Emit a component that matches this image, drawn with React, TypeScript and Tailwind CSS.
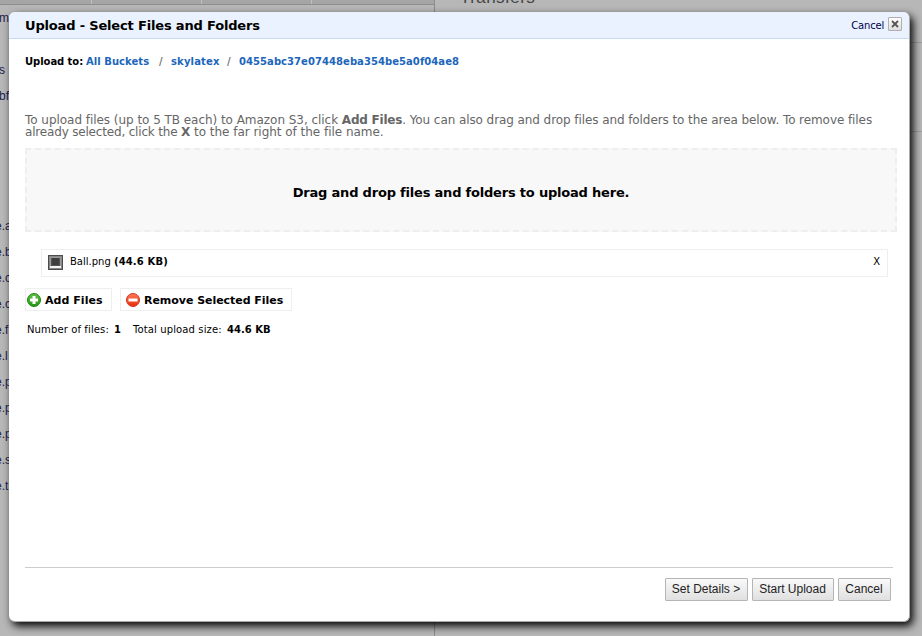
import type { ReactNode } from "react";

const objects = [".a", ".b", ".c", ".c", ".f", ".l", ".p", ".p", ".p", ".s", ".t"];

function Backdrop() {
  return (
    <div className="flex h-full w-full bg-[#b7b7b7] font-['Liberation_Sans',Arial,sans-serif]">
      <div className="h-full w-[435px] shrink-0 border-r border-[#8c8c8c]">
        <div className="flex h-[5px] border-b border-[#8e8e8e] bg-[#a5a5a5]">
          <div className="w-[92px] border-r border-[#c0c0c0]" />
          <div className="w-[110px] border-r border-[#c0c0c0]" />
          <div className="w-[110px] border-r border-[#c0c0c0]" />
        </div>
        <div className="w-[9px] overflow-hidden pt-[2px] text-[12px] text-[#20204a]">
          <div className="-ml-px h-[52px] leading-[22px]">m</div>
          <div className="-ml-px h-[26px] leading-[22px]">s</div>
          <div className="-ml-px h-[130px] leading-[22px]">bf</div>
          {objects.map((ext, i) => (
            <div key={i} className="-ml-[5px] h-[26px] leading-[22px]">
              e{ext}
            </div>
          ))}
        </div>
      </div>
      <div className="flex-1">
        <div className="-mt-[12px] h-[54px] pl-[25px] text-[17px] leading-[20px] tracking-[0.45px] text-[#444]">
          Transfers
        </div>
        <div className="h-[90px] border-y border-[#9f9f9f]" />
      </div>
    </div>
  );
}

function ToolButton({ children, className }: { children: ReactNode; className: string }) {
  return (
    <button
      className={`flex h-[23px] items-center gap-[4px] whitespace-nowrap border border-[#eee] text-[11px] font-bold leading-none text-black ${className}`}
    >
      {children}
    </button>
  );
}

function FooterButton({ children, className }: { children: ReactNode; className: string }) {
  return (
    <button
      className={`h-[23px] whitespace-nowrap rounded-[1px] border border-[#b5b5b5] bg-linear-to-b from-[#f9f9f9] to-[#e0e0e0] pb-px pr-px text-center font-['Liberation_Sans',Arial,sans-serif] text-[12px] leading-[20px] text-[#222] ${className}`}
    >
      {children}
    </button>
  );
}

function AddIcon() {
  return (
    <svg width="14" height="14" viewBox="0 0 14 14">
      <defs>
        <linearGradient id="green" x1="0" y1="0" x2="0" y2="1">
          <stop offset="0" stopColor="#62c044" />
          <stop offset="1" stopColor="#1f9a12" />
        </linearGradient>
      </defs>
      <circle cx="7" cy="7" r="6.5" fill="url(#green)" stroke="#26801c" />
      <path d="M5.5 3h3v2.5H11v3H8.5V11h-3V8.5H3v-3h2.5z" fill="#fff" />
    </svg>
  );
}

function RemoveIcon() {
  return (
    <svg width="14" height="14" viewBox="0 0 14 14">
      <defs>
        <linearGradient id="red" x1="0" y1="0" x2="0" y2="1">
          <stop offset="0" stopColor="#ff7a5a" />
          <stop offset="1" stopColor="#e82a08" />
        </linearGradient>
      </defs>
      <circle cx="7" cy="7" r="6.5" fill="url(#red)" stroke="#cf3a20" />
      <rect x="2.5" y="5.5" width="9" height="3" fill="#fff" />
    </svg>
  );
}

function FileIcon() {
  return (
    <svg width="15" height="15" viewBox="0 0 15 15" shapeRendering="crispEdges">
      <rect width="15" height="15" fill="#4c4c4c" />
      <rect x="1" y="1" width="13" height="13" fill="#888" />
      <rect x="2" y="2" width="11" height="11" fill="#999" />
      <rect x="2" y="11" width="11" height="2" fill="#f4f4f4" />
      <rect x="3" y="3" width="9" height="8" fill="#555" />
      <rect x="4" y="3" width="7" height="7" fill="#3f3f3f" />
    </svg>
  );
}

export default function App() {
  return (
    <div className="relative h-[636px] w-[922px] overflow-hidden">
      <Backdrop />
      <div className="absolute left-[9px] top-[12px] flex h-[610px] w-[901px] flex-col rounded-[6px] border-b border-r border-[#a9aca9] bg-white font-['DejaVu_Sans',Verdana,sans-serif] text-black shadow-[3px_4px_9px_0px_#000]">
        <header className="flex h-[27px] shrink-0 items-center justify-between rounded-t-[6px] border-b border-[#c3dcf2] bg-[#e9f2fe] pl-4 pr-[7px]">
          <h1 className="pt-[2px] text-[13px] font-bold leading-[16px] tracking-[-0.17px]">
            Upload - Select Files and Folders
          </h1>
          <div className="flex items-center gap-[4px] pb-[2px]">
            <span className="pt-[3px] text-[10px] leading-[12px] tracking-[-0.2px] text-[#000050]">Cancel</span>
            <button className="flex size-[14px] items-center justify-center rounded-[1px] border border-[#b0b0b0] bg-linear-to-b from-white to-[#ddd]">
              <svg width="8" height="8" viewBox="0 0 8 8">
                <path d="M1 1l6 6M7 1L1 7" stroke="#555" strokeWidth="1.8" />
              </svg>
            </button>
          </div>
        </header>

        <nav className="flex h-[44px] shrink-0 items-center whitespace-pre pl-4 text-[10px] font-bold text-[#1b66bb]">
          <span className="w-[61px] tracking-[-0.05px] text-black">Upload to:</span>
          <span className="w-[63px] tracking-[0.05px]">All Buckets</span>
          <span className="w-[22px] pl-[10px] text-[#777]">/</span>
          <span className="w-[48px] tracking-[0.15px]">skylatex</span>
          <span className="w-[20px] pl-[8px] text-[#777]">/</span>
          <span className="tracking-[0.06px]">0455abc37e07448eba354be5a0f04ae8</span>
        </nav>

        <p className="mt-[31px] whitespace-nowrap pl-4 text-[12px] leading-[12px] text-[#666]">
          <span className="tracking-[-0.04px]">To upload files (up to 5 TB each) to Amazon S3, click </span>
          <b className="tracking-[-0.22px]">Add Files</b>
          <span className="tracking-[-0.08px]">
            . You can also drag and drop files and folders to the area below. To remove files
          </span>
          <br />
          <span className="tracking-[-0.18px]">already selected, click the </span>
          <b>X</b>
          <span className="tracking-[-0.03px]"> to the far right of the file name.</span>
        </p>

        <div className="ml-4 mt-[10px] flex h-[84px] w-[872px] shrink-0 items-center justify-center border-2 border-dashed border-[#eee] bg-[#f8f8f8] pt-[5px] text-[13px] font-bold tracking-[-0.2px]">
          Drag and drop files and folders to upload here.
        </div>

        <div className="ml-8 mt-[17px] flex h-[28px] w-[847px] shrink-0 items-center border border-[#eee] pb-px pl-[6px] pr-[7px] text-[10px]">
          <FileIcon />
          <span className="ml-[7px] flex-1 pb-[2px]">
            Ball.png <b className="tracking-[0.15px]">(44.6 KB)</b>
          </span>
          <span className="pb-[3px]">X</span>
        </div>

        <div className="mt-[11px] flex gap-[8px] pl-4">
          <ToolButton className="w-[87px] pl-px">
            <AddIcon />
            <span className="pt-px tracking-[0.05px]">Add Files</span>
          </ToolButton>
          <ToolButton className="w-[172px] pl-[5px]">
            <RemoveIcon />
            <span className="pt-px tracking-[-0.04px]">Remove Selected Files</span>
          </ToolButton>
        </div>

        <div className="mt-[12px] flex whitespace-pre pl-[18px] text-[10px] leading-[14px]">
          <span className="w-[87px] tracking-[0.12px]">Number of files:</span>
          <b className="w-[19px]">1</b>
          <span className="w-[94px] tracking-[0.12px]">Total upload size:</span>
          <b>44.6 KB</b>
        </div>

        <footer className="ml-4 mt-auto mb-[20px] flex h-[34px] w-[868px] shrink-0 items-end justify-end gap-[4px] border-t border-[#ccc] pr-[2px]">
          <FooterButton className="w-[83px]">Set Details &gt;</FooterButton>
          <FooterButton className="w-[82px]">Start Upload</FooterButton>
          <FooterButton className="w-[53px]">Cancel</FooterButton>
        </footer>
      </div>
    </div>
  );
}
